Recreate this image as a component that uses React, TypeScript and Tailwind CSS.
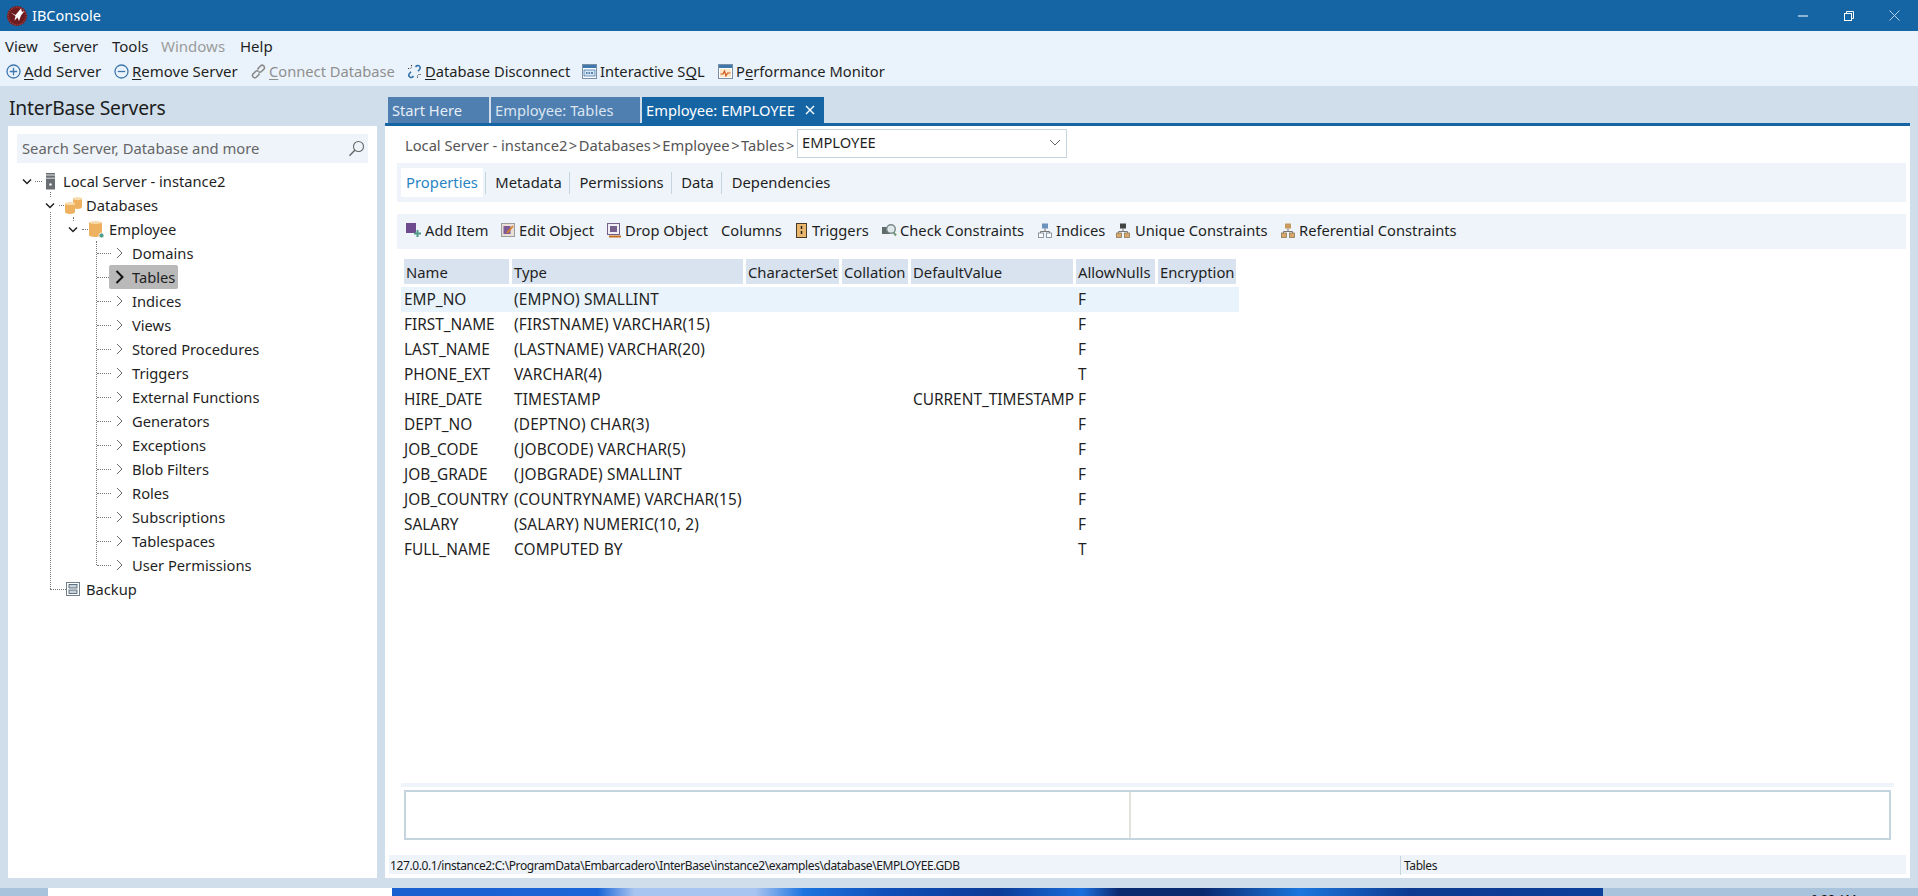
import React from "react";

const FONT = "font-['Noto_Sans','Open_Sans',sans-serif]";

function Logo() {
  return (
    <svg width="20" height="20" viewBox="0 0 20 20">
      <circle cx="10" cy="10" r="10" fill="#6b1a1f" />
      <circle cx="10" cy="10" r="8.800" fill="none" stroke="#9a3a38" strokeWidth="1.600" strokeDasharray="1.500 1" />
      <path d="M3.500 6.500l5 2.500 5.500-6.500 1 3.500 2.500-1-3.500 4.500-2 5.500-1.500-3.500-3 3 1-4.500z" fill="#fff" />
    </svg>
  );
}

function Cyl({ x, y, w, h, dot }: { x: number; y: number; w: number; h: number; dot?: boolean }) {
  return (
    <g>
      <path d={`M${x} ${y + 1.5}v${h - 3.5}c0 2.600 ${w} 2.600 ${w} 0v-${h - 3.5}z`} fill="#eeb15f" />
      <ellipse cx={x + w / 2} cy={y + 1.5} rx={w / 2} ry="1.500" fill="#f8dcae" />
      {dot && <circle cx={x + w - 0.5} cy={y + h - 1.5} r="2.500" fill="#4f9c88" stroke="#fff" strokeWidth="0.800" />}
    </g>
  );
}

function ServerIcon() {
  return (
    <svg width="11" height="17" viewBox="0 0 11 17">
      <rect x="1" y="0" width="9" height="16.500" fill="#6a6e72" />
      <rect x="1" y="1.500" width="9" height="1" fill="#dfe3e6" />
      <rect x="1" y="4.500" width="9" height="1.500" fill="#b3b8bc" />
      <circle cx="5.500" cy="11.500" r="1.300" fill="#eef4fa" />
    </svg>
  );
}

function PlusCircle() {
  return (
    <svg width="15" height="15" viewBox="0 0 15 15" fill="none" stroke="#3f78ad" strokeWidth="1.300">
      <circle cx="7.500" cy="7.500" r="6.500" />
      <path d="M7.500 3.800v7.400M3.800 7.500h7.400" />
    </svg>
  );
}

function MinusCircle() {
  return (
    <svg width="15" height="15" viewBox="0 0 15 15" fill="none" stroke="#3f78ad" strokeWidth="1.300">
      <circle cx="7.500" cy="7.500" r="6.500" />
      <path d="M3.800 7.500h7.400" />
    </svg>
  );
}

function LinkIcon() {
  return (
    <svg width="15" height="15" viewBox="0 0 15 15" fill="none" stroke="#8a8a8a" strokeWidth="1.600">
      <path d="M6.500 5.500l1-1.500 2-2c1-1 2.500-.8 3.300 0s1 2.200 0 3.200l-2.300 2.300c-1 1-2.200.8-3 0" />
      <path d="M8.500 9.500l-1 1.500-2 2c-1 1-2.500.8-3.300 0s-1-2.200 0-3.200l2.300-2.300c1-1 2.200-.8 3 0" />
    </svg>
  );
}

function BrokenLink() {
  return (
    <svg width="15" height="15" viewBox="0 0 15 15" fill="none" strokeWidth="1.500">
      <path d="M8.500 3c1.200-1.700 2.800-2 3.800-1s1.200 2.400.2 3.600L11 7.200" stroke="#2f6ea8" />
      <path d="M6.500 12c-1.200 1.700-2.800 2-3.800 1S1.500 10.600 2.500 9.400L4 7.800" stroke="#2f6ea8" />
      <path d="M1 4.500h2.500M4.500 1v2.500M11.500 10.500H14M10.500 11.500V14" stroke="#444" strokeWidth="1.100" strokeDasharray="1 .8" />
    </svg>
  );
}

function WindowIcon({ chart }: { chart?: boolean }) {
  return (
    <svg width="15" height="15" viewBox="0 0 15 15">
      <rect x="0.500" y="0.500" width="14" height="14" fill="#fff" stroke="#7a8ea5" />
      <rect x="1" y="1" width="13" height="3" fill="#3f78ad" />
      {chart ? (
        <>
          <rect x="2" y="5" width="11" height="8" fill="#fbe8c8" />
          <path d="M2.500 10h2.500l1.500-3 1.500 5 1.500-3h3" fill="none" stroke="#d2561e" strokeWidth="1.200" />
        </>
      ) : (
        <>
          <rect x="2" y="6" width="11" height="6" fill="#d8e6f3" stroke="#3f78ad" strokeWidth="0.800" />
          <path d="M4 9h1.500M6.500 9h1.500M9 9h2" stroke="#2b5f90" strokeWidth="1.500" />
        </>
      )}
    </svg>
  );
}

function SearchIcon() {
  return (
    <svg width="17" height="17" viewBox="0 0 17 17" fill="none" stroke="#666" strokeWidth="1.100">
      <circle cx="10.500" cy="6.500" r="5" />
      <path d="M6.800 10.200L1.500 15.800" strokeWidth="1.400" />
    </svg>
  );
}

function Chevron({ open, strong }: { open?: boolean; strong?: boolean }) {
  if (open)
    return (
      <svg width="10" height="7" viewBox="0 0 10 7" fill="none" stroke="#222" strokeWidth="1.500">
        <path d="M1 1.500l4 4 4-4" />
      </svg>
    );
  return strong ? (
    <svg width="9" height="14" viewBox="0 0 9 14" fill="none" stroke="#111" strokeWidth="2">
      <path d="M1.500 1l6 6-6 6" />
    </svg>
  ) : (
    <svg width="7" height="12" viewBox="0 0 7 12" fill="none" stroke="#666" strokeWidth="1">
      <path d="M1 1l5 5-5 5" />
    </svg>
  );
}

function AddItemIcon() {
  return (
    <svg width="16" height="15" viewBox="0 0 16 15">
      <rect x="0" y="0" width="10" height="10" fill="#6e4a8e" />
      <path d="M11.500 7v7M8 10.500h7" stroke="#4f9b87" strokeWidth="2" />
    </svg>
  );
}
function EditIcon() {
  return (
    <svg width="14" height="14" viewBox="0 0 14 14">
      <rect x="0.500" y="0.500" width="13" height="13" fill="#e9dfd6" stroke="#9c9c9c" />
      <rect x="2.500" y="3" width="7" height="8" fill="#7d5a96" />
      <path d="M6 10l6-7" stroke="#d9822b" strokeWidth="1.800" />
    </svg>
  );
}
function DropIcon() {
  return (
    <svg width="14" height="15" viewBox="0 0 14 15">
      <rect x="0.500" y="0.500" width="12" height="11" fill="#f2eef6" stroke="#75618c" />
      <rect x="3" y="3" width="7" height="6" fill="#75618c" />
      <rect x="2" y="12.500" width="12" height="2" fill="#c5701f" />
    </svg>
  );
}
function TriggerIcon() {
  return (
    <svg width="11" height="15" viewBox="0 0 11 15">
      <rect x="0.500" y="0.500" width="10" height="14" fill="#e8b66c" stroke="#4a3a2a" />
      <path d="M5.500 3v3M5.500 8v3" stroke="#222" strokeWidth="1.500" />
    </svg>
  );
}
function CheckIcon() {
  return (
    <svg width="15" height="14" viewBox="0 0 15 14">
      <rect x="0" y="4" width="8" height="7" fill="#5e6b6b" />
      <circle cx="9" cy="6" r="4.300" fill="#dfe8ea" stroke="#7a8a8a" strokeWidth="1.400" />
      <path d="M11.500 9.500l2.500 3" stroke="#6f9a7a" strokeWidth="2" />
    </svg>
  );
}
function TreeIcon({ top, leaf, edge }: { top: string; leaf: string; edge: string }) {
  return (
    <svg width="14" height="15" viewBox="0 0 14 15">
      <rect x="4" y="0.500" width="6" height="5" fill={top} />
      <path d="M7 5.500v3M2.500 10V8.500h9V10" fill="none" stroke="#777" />
      <rect x="0.500" y="10" width="5" height="4.500" fill={leaf} stroke={edge} strokeWidth="0.800" />
      <rect x="8.500" y="10" width="5" height="4.500" fill={leaf} stroke={edge} strokeWidth="0.800" />
    </svg>
  );
}
function BackupIcon() {
  return (
    <svg width="14" height="14" viewBox="0 0 14 14" fill="none">
      <rect x="0.500" y="0.500" width="13" height="13" stroke="#6f7f8c" />
      <rect x="3" y="2.500" width="8" height="3.500" fill="#c7d3dc" stroke="#46586a" strokeWidth="0.800" />
      <rect x="3" y="8" width="8" height="3.500" fill="#c7d3dc" stroke="#46586a" strokeWidth="0.800" />
    </svg>
  );
}

const U = ({ children }: { children: React.ReactNode }) => <span className="underline underline-offset-2">{children}</span>;

function TitleBar() {
  return (
    <div className="flex h-[31px] items-center bg-[#1565a5] text-white">
      <div className="ml-[7px]">
        <Logo />
      </div>
      <span className="ml-[5px] text-[14.500px]">IBConsole</span>
      <div className="ml-auto flex items-center">
        <svg className="mr-[36px]" width="10" height="2" viewBox="0 0 10 2">
          <rect width="10" height="1" y="0.500" fill="#fff" />
        </svg>
        <svg className="mr-[35px]" width="10" height="10" viewBox="0 0 10 10" fill="none" stroke="#fff">
          <rect x="0.500" y="2.500" width="7" height="7" />
          <path d="M2.500 2.500V0.500h7v7H7.500" />
        </svg>
        <svg className="mr-[18px]" width="11" height="11" viewBox="0 0 11 11" stroke="#b5cfe6" strokeWidth="1">
          <path d="M0.500 0.500l10 10M10.500 0.500l-10 10" />
        </svg>
      </div>
    </div>
  );
}

function MenuBar() {
  return (
    <div className="flex h-[31px] items-center bg-[#eaf3fb] pl-[5px] text-[15px] text-[#1f1f1f]">
      <span className="w-[48px]">View</span>
      <span className="w-[59px]">Server</span>
      <span className="w-[49px]">Tools</span>
      <span className="w-[79px] text-[#9b9b9b]">Windows</span>
      <span>Help</span>
    </div>
  );
}

function ToolBar() {
  return (
    <div className="flex h-[24px] items-center bg-[#eaf3fb] pb-[5px] pl-[6px] text-[14.700px] text-[#1f1f1f]">
      <span className="flex w-[108px] items-center gap-[3px] text-[15px]"><PlusCircle /><span><U>A</U>dd Server</span></span>
      <span className="flex w-[137px] items-center gap-[3px] text-[15px]"><MinusCircle /><span><U>R</U>emove Server</span></span>
      <span className="flex w-[156px] items-center gap-[3px] text-[#8f8f8f]"><LinkIcon /><span><U>C</U>onnect Database</span></span>
      <span className="flex w-[175px] items-center gap-[3px]"><BrokenLink /><span><U>D</U>atabase Disconnect</span></span>
      <span className="flex w-[136px] items-center gap-[3px]"><WindowIcon /><span>Interactive S<U>Q</U>L</span></span>
      <span className="flex items-center gap-[3px]"><WindowIcon chart /><span>P<U>e</U>rformance Monitor</span></span>
    </div>
  );
}

const LEAVES = ["Domains", "Tables", "Indices", "Views", "Stored Procedures", "Triggers", "External Functions", "Generators", "Exceptions", "Blob Filters", "Roles", "Subscriptions", "Tablespaces", "User Permissions"];

function Dash({ w }: { w: number }) {
  return <span className="block h-0 border-t border-dotted border-[#777]" style={{ width: w }} />;
}

function Tree() {
  return (
    <div className="relative mt-[6px] pl-[13px] text-[14.700px] text-[#1f1f1f]">
      {/* guide lines of the tree */}
      <span className="absolute left-[42px] top-[23px] h-[397px] border-l border-dotted border-[#777]" />
      <span className="absolute left-[65px] top-[48px] h-[8px] border-l border-dotted border-[#777]" />
      <span className="absolute left-[88px] top-[72px] h-[324px] border-l border-dotted border-[#777]" />

      <div className="flex h-[24px] items-center">
        <span className="flex w-[11px] justify-center"><Chevron open /></span>
        <span className="ml-[3px]"><Dash w={7} /></span>
        <span className="ml-[3px]"><ServerIcon /></span>
        <span className="ml-[7px]">Local Server - instance2</span>
      </div>
      <div className="relative flex h-[24px] items-center pl-[23px]">
        <span className="flex h-[14px] w-[11px] items-center justify-center bg-white"><Chevron open /></span>
        <span className="ml-[4px]"><Dash w={5} /></span>
        <svg className="ml-[1px]" width="18" height="17" viewBox="0 0 18 17">
          <Cyl x={8} y={0} w={9} h={12} />
          <Cyl x={0} y={5} w={10} h={12} />
        </svg>
        <span className="ml-[3px]">Databases</span>
      </div>
      <div className="relative flex h-[24px] items-center pl-[46px]">
        <span className="flex h-[14px] w-[11px] items-center justify-center bg-white"><Chevron open /></span>
        <span className="ml-[4px]"><Dash w={6} /></span>
        <svg className="ml-[1px]" width="16" height="17" viewBox="0 0 16 17">
          <Cyl x={0} y={0} w={13} h={16} dot />
        </svg>
        <span className="ml-[4px]">Employee</span>
      </div>
      {LEAVES.map((name) => (
        <div key={name} className="relative flex h-[24px] items-center pl-[76px]">
          <Dash w={14} />
          {name === "Tables" ? (
            <span className="ml-[-2px] flex h-[24px] w-[69px] items-center rounded-[2px] bg-[#b9b9b9] pl-[6px]">
              <Chevron strong />
              <span className="ml-[8px]">{name}</span>
            </span>
          ) : (
            <span className="ml-[5px] flex items-center">
              <Chevron />
              <span className="ml-[9px]">{name}</span>
            </span>
          )}
        </div>
      ))}
      <div className="relative flex h-[24px] items-center pl-[29px]">
        <Dash w={16} />
        <span><BackupIcon /></span>
        <span className="ml-[6px]">Backup</span>
      </div>
    </div>
  );
}

function LeftPanel() {
  return (
    <div className="flex w-[377px] shrink-0 flex-col pl-[8px]">
      <div className="flex h-[40px] items-center pl-[1px] pt-[4px] text-[19.300px] tracking-[-0.2px] text-[#1c1c1c]">InterBase Servers</div>
      <div className="flex-1 bg-white pt-[8px]">
        <div className="mx-[9px] flex h-[29px] items-center justify-between bg-[#eef4fa] pl-[5px] pr-[3px] text-[14.800px] text-[#666]">
          <span>Search Server, Database and more</span>
          <SearchIcon />
        </div>
        <Tree />
      </div>
    </div>
  );
}

function Tabs() {
  return (
    <div className="flex h-[37px] items-end pl-[3px] text-[14.700px]">
      <div className="flex h-[26px] w-[101px] items-center bg-[#4f7eb0] pl-[4px] text-[#e6eef6]">Start Here</div>
      <div className="ml-[2px] flex h-[26px] w-[149px] items-center bg-[#4f7eb0] pl-[4px] text-[#dbe6f1]">Employee: Tables</div>
      <div className="ml-[2px] flex h-[26px] w-[182px] items-center bg-[#1565a5] pl-[4px] text-white">
        <span>Employee: EMPLOYEE</span>
        <svg className="ml-auto mr-[9px]" width="10" height="10" viewBox="0 0 10 10" stroke="#fff" strokeWidth="1.400">
          <path d="M1 1l8 8M9 1l-8 8" />
        </svg>
      </div>
    </div>
  );
}

function Breadcrumb() {
  return (
    <div className="flex h-[33px] items-center pl-[20px] pt-[1px] text-[14.700px] text-[#555]">
      <span className="flex w-[392px] gap-[1.500px] whitespace-nowrap pt-[4px]">
        <span>Local Server - instance2</span><span>{">"}</span><span>Databases</span><span>{">"}</span><span>Employee</span><span>{">"}</span><span>Tables</span><span>{">"}</span>
      </span>
      <div className="flex h-[29px] w-[270px] items-center justify-between border border-[#c5d5e0] bg-white pb-[1px] pl-[4px] pr-[5px] text-[#1f1f1f]">
        <span>EMPLOYEE</span>
        <svg width="12" height="7" viewBox="0 0 12 7" fill="none" stroke="#666">
          <path d="M1 1l5 5 5-5" />
        </svg>
      </div>
    </div>
  );
}

function SubTabs() {
  return (
    <div className="ml-[12px] mr-[4px] mt-[4px] flex h-[39px] items-center bg-[#eef4fa] pl-[4px] text-[14.800px] text-[#1f1f1f]">
      <div className="flex h-[29px] w-[82px] items-center justify-center bg-white text-[#2a84c4]">Properties</div>
      <div className="ml-[2px] flex h-[22px] w-[84px] items-center justify-center border-l border-[#c5d5e0] pl-[2px]">Metadata</div>
      <div className="flex h-[22px] w-[102px] items-center justify-center border-l border-[#c5d5e0] pl-[2px]">Permissions</div>
      <div className="flex h-[22px] w-[50px] items-center justify-center border-l border-[#c5d5e0] pl-[2px]">Data</div>
      <div className="flex h-[22px] w-[118px] items-center justify-center border-l border-[#c5d5e0] pl-[1px]">Dependencies</div>
    </div>
  );
}

function ActionBar() {
  return (
    <div className="ml-[12px] mr-[4px] mt-[12px] flex h-[35px] items-center bg-[#eef4fa] pb-[2px] pl-[9px] text-[14.700px] text-[#1f1f1f]">
      <span className="flex w-[95px] items-center gap-[3px]"><AddItemIcon /><span>Add Item</span></span>
      <span className="flex w-[106px] items-center gap-[4px]"><EditIcon /><span>Edit Object</span></span>
      <span className="flex w-[114px] items-center gap-[4px]"><DropIcon /><span>Drop Object</span></span>
      <span className="w-[75px]">Columns</span>
      <span className="flex w-[86px] items-center gap-[5px]"><TriggerIcon /><span>Triggers</span></span>
      <span className="flex w-[156px] items-center gap-[3px]"><CheckIcon /><span>Check Constraints</span></span>
      <span className="flex w-[78px] items-center gap-[4px]"><TreeIcon top="#6d93bd" leaf="#fff" edge="#6f7f8c" /><span>Indices</span></span>
      <span className="flex w-[164px] items-center gap-[5px]"><TreeIcon top="#444" leaf="#d9a768" edge="#8a7a5a" /><span>Unique Constraints</span></span>
      <span className="ml-[1px] flex items-center gap-[4px]"><TreeIcon top="#c99a5e" leaf="#d9a768" edge="#8a7a5a" /><span>Referential Constraints</span></span>
    </div>
  );
}

const COLS = [
  { n: "Name", w: "w-[105px]" },
  { n: "Type", w: "w-[231px]" },
  { n: "CharacterSet", w: "w-[93px]" },
  { n: "Collation", w: "w-[66px]" },
  { n: "DefaultValue", w: "w-[162px]" },
  { n: "AllowNulls", w: "w-[79px]" },
  { n: "Encryption", w: "w-[78px]" },
];

const ROWS: [string, string, string, string][] = [
  ["EMP_NO", "(EMPNO) SMALLINT", "", "F"],
  ["FIRST_NAME", "(FIRSTNAME) VARCHAR(15)", "", "F"],
  ["LAST_NAME", "(LASTNAME) VARCHAR(20)", "", "F"],
  ["PHONE_EXT", "VARCHAR(4)", "", "T"],
  ["HIRE_DATE", "TIMESTAMP", "CURRENT_TIMESTAMP", "F"],
  ["DEPT_NO", "(DEPTNO) CHAR(3)", "", "F"],
  ["JOB_CODE", "(JOBCODE) VARCHAR(5)", "", "F"],
  ["JOB_GRADE", "(JOBGRADE) SMALLINT", "", "F"],
  ["JOB_COUNTRY", "(COUNTRYNAME) VARCHAR(15)", "", "F"],
  ["SALARY", "(SALARY) NUMERIC(10, 2)", "", "F"],
  ["FULL_NAME", "COMPUTED BY", "", "T"],
];

function Table() {
  return (
    <div className="ml-[16px] mt-[10px] flex-1 text-[#1f1f1f]">
      <div className="ml-[3px] flex h-[25px] gap-[3px] text-[14.800px]">
        {COLS.map((c) => (
          <div key={c.n} className={`${c.w} flex items-center whitespace-nowrap bg-[#d8e3ef] pl-[2px] pt-[1px]`}>{c.n}</div>
        ))}
      </div>
      <div className="mt-[3px] text-[15.400px]">
        {ROWS.map((r, i) => (
          <div key={r[0]} className={i === 0 ? "flex h-[25px] w-[838px] items-center whitespace-nowrap bg-[#e8f3fc] pl-[3px] pt-[1px]" : "flex h-[25px] w-[838px] items-center whitespace-nowrap pl-[3px] pt-[1px]"}>
            <span className="w-[110px]">{r[0]}</span>
            <span className="w-[399px] tracking-[0.15px]">{r[1]}</span>
            <span className="w-[165px]">{r[2]}</span>
            <span>{r[3]}</span>
          </div>
        ))}
      </div>
    </div>
  );
}

function BottomPanes() {
  return (
    <div>
      <div className="mx-[16px] h-[4px] bg-[#eef4fa]" />
      <div className="ml-[19px] mr-[19px] mt-[3px] flex h-[50px] items-center border-2 border-[#c5d5e0] bg-white">
        <div className="ml-[723px] h-[46px] w-[2px] bg-[#e2e2dc]" />
      </div>
    </div>
  );
}

function StatusBar() {
  return (
    <div className="ml-[4px] mr-[4px] mt-[15px] flex h-[19px] items-center bg-[#eef4fa] pt-[2px] text-[12px] tracking-[-0.4px] text-[#1a1a1a]">
      <span className="w-[1011px] pl-[1px]">127.0.0.1/instance2:C:\ProgramData\Embarcadero\InterBase\instance2\examples\database\EMPLOYEE.GDB</span>
      <span className="flex h-[19px] items-center border-l border-[#c5d5e0] pl-[3px]">Tables</span>
    </div>
  );
}

function RightPanel() {
  return (
    <div className="flex min-w-0 flex-1 flex-col pl-[8px] pr-[8px]">
      <Tabs />
      <div className="flex flex-1 flex-col border-t-[3px] border-[#1565a5] bg-white">
        <Breadcrumb />
        <SubTabs />
        <ActionBar />
        <Table />
        <BottomPanes />
        <StatusBar />
        <div className="h-[4px]" />
      </div>
    </div>
  );
}

function Desktop() {
  return (
    <div className="flex h-[8px] overflow-hidden">
      <div className="w-[48px] bg-[#a9c3dc]" />
      <div className="w-[344px] bg-white" />
      <div className="w-[1211px] bg-[linear-gradient(90deg,#1a5fcf_0%,#1a66d8_17%,#a8c4f0_20%,#a8c4f0_30%,#1c74e0_34%,#0f4fb8_41%,#0c3a96_50%,#1b6fdc_57%,#0a2a70_60%,#0a2a70_67%,#1b76dd_75%,#0d3a90_84%,#0a3f9a_100%)]" />
      <div className="flex-1 bg-[#a9c3dc] pl-[208px] pt-[5px] text-[12px] leading-[14px] text-[#111]">9:28 AM</div>
    </div>
  );
}

export default function App() {
  return (
    <div className={`${FONT} flex h-[896px] w-[1918px] flex-col overflow-hidden bg-[#cfdeea]`}>
      <TitleBar />
      <MenuBar />
      <ToolBar />
      <div className="flex min-h-0 flex-1 pb-[10px]">
        <LeftPanel />
        <RightPanel />
      </div>
      <Desktop />
    </div>
  );
}
